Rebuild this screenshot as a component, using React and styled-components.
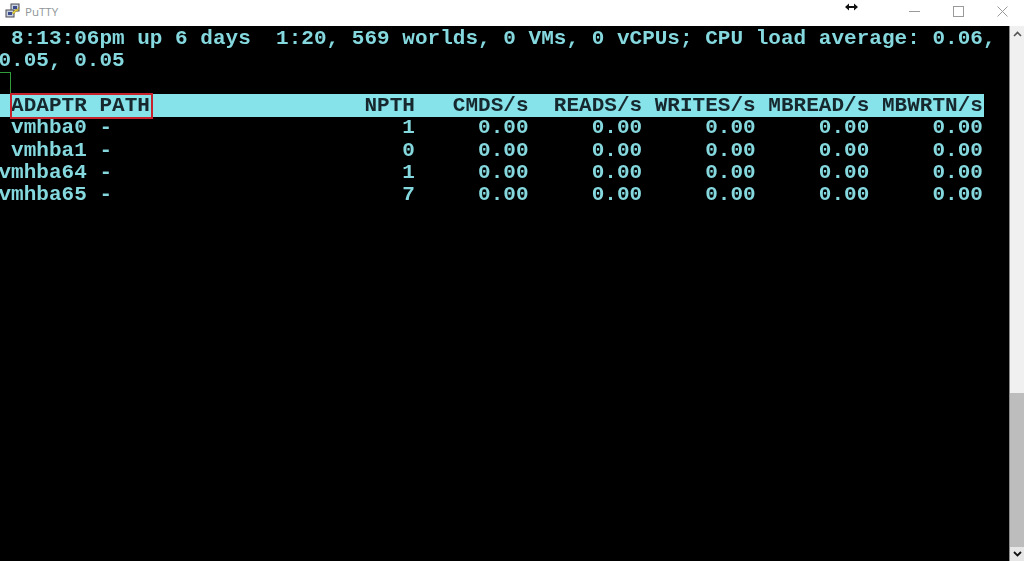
import React from "react";
import styled, { createGlobalStyle } from "styled-components";

const Global = createGlobalStyle`
  html, body { margin: 0; padding: 0; background: #000; overflow: hidden; }
  #root { width: 1024px; height: 561px; }
`;

const Window = styled.div`
  width: 1024px;
  height: 561px;
  display: flex;
  flex-direction: column;
  overflow: hidden;
  background: #000;
`;

const TitleBar = styled.header`
  flex: 0 0 26px;
  box-sizing: border-box;
  background: #fff;
  display: flex;
  align-items: center;
  padding: 0 0 4px 5px;
  position: relative;
`;

const AppIcon = styled.svg`
  width: 16px;
  height: 16px;
  flex: none;
`;

const Title = styled.span`
  font: 11.5px "Open Sans", "Noto Sans", sans-serif;
  color: #8f9599;
  margin-left: 4px;
  flex: 1;
`;

const ResizeCursor = styled.svg`
  position: absolute;
  left: 845px;
  top: 3px;
  width: 13px;
  height: 8px;
`;

const WindowButton = styled.div`
  width: 44px;
  height: 22px;
  display: flex;
  align-items: center;
  justify-content: center;
`;

const Main = styled.div`
  flex: 1;
  display: flex;
  min-height: 0;
`;

const Terminal = styled.main`
  flex: 1;
  position: relative;
  overflow: hidden;
  background: #000;
  padding-top: 1px;
`;

const Line = styled.pre`
  margin: 0 0 0 -1.6px;
  box-sizing: border-box;
  height: 22.4px;
  padding-top: 0.6px;
  font: bold 21px/22.4px "Liberation Mono", "Courier New", monospace;
  letter-spacing: 0.02px;
  color: #84d8de;
  filter: blur(0.35px);
`;

const HeaderBand = styled.div`
  width: 984px;
  height: 22.4px;
  background: #86e3ea;
`;

const HeaderLine = styled(Line)`
  color: #16282e;
`;

const RedBox = styled.div`
  position: absolute;
  left: 10px;
  top: 67px;
  width: 143px;
  height: 26px;
  box-sizing: border-box;
  border: 2px solid #c8232c;
`;

const GreenCursor = styled.div`
  position: absolute;
  left: 0;
  top: 46px;
  width: 11px;
  height: 22px;
  box-sizing: border-box;
  border-top: 1px solid #2f9e3a;
  border-right: 1px solid #2f9e3a;
`;

const Scrollbar = styled.aside`
  flex: 0 0 15px;
  background: #f0f0f0;
  border-left: 1px solid #8a8a8a;
  box-sizing: border-box;
  display: flex;
  flex-direction: column;
`;

const ScrollButton = styled.div`
  flex: 0 0 ${(p) => (p.$bottom ? "14px" : "16px")};
  display: flex;
  align-items: center;
  justify-content: center;
  background: ${(p) => (p.$bottom ? "#e6e6e6" : "#f0f0f0")};
`;

const Track = styled.div`
  flex: 1;
  display: flex;
  flex-direction: column;
  justify-content: flex-end;
`;

const Thumb = styled.div`
  height: 154px;
  background: #bdbdbd;
`;

const lines = [
  " 8:13:06pm up 6 days  1:20, 569 worlds, 0 VMs, 0 vCPUs; CPU load average: 0.06,",
  "0.05, 0.05",
  " ",
];

const header = " ADAPTR PATH                 NPTH   CMDS/s  READS/s WRITES/s MBREAD/s MBWRTN/s";

const rows = [
  ["vmhba0", 1],
  ["vmhba1", 0],
  ["vmhba64", 1],
  ["vmhba65", 7],
];

const row = ([name, n]) =>
  `${name.padStart(7)} -${String(n).padStart(24)}${"0.00".padStart(9).repeat(5)}`;

export default function App() {
  return (
    <Window>
      <Global />
      <TitleBar>
        <AppIcon viewBox="0 0 16 16">
          <rect x="6" y="1" width="8" height="7" fill="#c9d2e0" stroke="#4a4a52" />
          <rect x="8" y="3" width="4" height="3" fill="#3b4a8a" />
          <rect x="1" y="7" width="8" height="7" fill="#c9d2e0" stroke="#4a4a52" />
          <rect x="3" y="9" width="4" height="3" fill="#3b4a8a" />
          <path d="M7 10l4-4 1 1 2-3-1 4-2 0-2 3z" fill="#e8d33a" stroke="#8a7a10" strokeWidth="0.4" />
        </AppIcon>
        <Title>PuTTY</Title>
        <ResizeCursor viewBox="0 0 13 8">
          <path d="M0 4l4-3.500v2.500h5V.5L13 4 9 7.500V5H4v2.500z" fill="#111" />
        </ResizeCursor>
        <WindowButton>
          <svg width="11" height="11" viewBox="0 0 11 11"><path d="M0 5.500h11" stroke="#9a9a9a" /></svg>
        </WindowButton>
        <WindowButton>
          <svg width="11" height="11" viewBox="0 0 11 11"><rect x="0.500" y="0.500" width="10" height="10" fill="none" stroke="#9a9a9a" /></svg>
        </WindowButton>
        <WindowButton>
          <svg width="11" height="11" viewBox="0 0 11 11"><path d="M.5.500l10 10M10.500.500l-10 10" stroke="#9a9a9a" /></svg>
        </WindowButton>
      </TitleBar>
      <Main>
        <Terminal>
          {lines.map((l, i) => (
            <Line key={i}>{l}</Line>
          ))}
          <HeaderBand>
            <HeaderLine>{header}</HeaderLine>
          </HeaderBand>
          {rows.map((r) => (
            <Line key={r[0]}>{row(r)}</Line>
          ))}
          <GreenCursor />
          <RedBox />
        </Terminal>
        <Scrollbar>
          <ScrollButton>
            <svg width="9" height="6" viewBox="0 0 9 6"><path d="M1 5l3.500-3.500L8 5" fill="none" stroke="#555" strokeWidth="1.600" /></svg>
          </ScrollButton>
          <Track>
            <Thumb />
          </Track>
          <ScrollButton $bottom>
            <svg width="9" height="6" viewBox="0 0 9 6"><path d="M1 1l3.500 3.500L8 1" fill="none" stroke="#111" strokeWidth="1.800" /></svg>
          </ScrollButton>
        </Scrollbar>
      </Main>
    </Window>
  );
}
